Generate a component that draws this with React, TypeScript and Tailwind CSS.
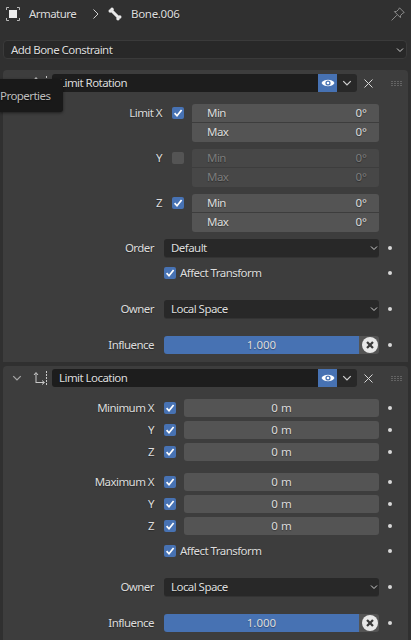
import type { ReactNode } from "react";

const Check = () => (
  <svg viewBox="0 0 12 12" className="w-3 h-3">
    <path d="M2.6 6.2 L5 8.8 L9.6 3" fill="none" stroke="#fff" strokeWidth="1.7" />
  </svg>
);

const Checkbox = ({ on = true }: { on?: boolean }) => (
  <div className={on ? "w-3 h-3 shrink-0 rounded-[2px] bg-[#4772b3]" : "w-3 h-3 shrink-0 rounded-[2px] bg-[#545454]"}>
    {on && <Check />}
  </div>
);

const Chevron = ({ className = "w-2 h-2", stroke = "#d0d0d0" }: { className?: string; stroke?: string }) => (
  <svg viewBox="0 0 8 8" className={className}>
    <path d="M1 2.5 L4 5.5 L7 2.5" fill="none" stroke={stroke} strokeWidth="1" />
  </svg>
);

const Dot = () => <div className="w-[4px] h-[4px] rounded-full bg-[#d8d8d8]" />;

const Select = ({ text }: { text: string }) => (
  <div className="flex items-center justify-between h-[18px] w-full pl-[7px] pr-[1px] rounded-[3px] bg-[#282828] shadow-[0_1px_0_#333333]">
    <span>{text}</span>
    <Chevron />
  </div>
);

// label + control + decorator dot, the usual blender property row
const Row = ({ label, children, dot = true }: { label?: string; children: ReactNode; dot?: boolean }) => (
  <div className="flex items-center h-[18px]">
    <div className="w-[151px] text-right shrink-0">{label}</div>
    <div className="ml-[10px] w-[215px] shrink-0">{children}</div>
    <div className="ml-[9px] w-[4px]">{dot && <Dot />}</div>
  </div>
);

const AngleRow = ({ label, on = true }: { label: string; on?: boolean }) => {
  const fieldText = on ? "text-[#dcdcdc]" : "text-[#7c7c7c]";
  const fieldBg = on ? "bg-[#545454]" : "bg-[#474747]";
  return (
    <div className="flex items-start">
      <div className="w-[159px] h-[18px] flex items-center justify-end shrink-0">{label}</div>
      <div className="ml-[10px] mt-[3px]">
        <Checkbox on={on} />
      </div>
      <div className={`ml-[8px] w-[187px] flex flex-col gap-[1px] ${fieldText}`}>
        <div className={`flex justify-between items-center h-[18px] pl-[15px] pr-[12px] rounded-t-[3px] ${fieldBg}`}>
          <span>Min</span>
          <span className="tracking-normal">0°</span>
        </div>
        <div className={`flex justify-between items-center h-[19px] pb-[1px] pl-[15px] pr-[12px] rounded-b-[3px] ${fieldBg}`}>
          <span>Max</span>
          <span className="tracking-normal">0°</span>
        </div>
      </div>
    </div>
  );
};

const MeterRow = ({ label }: { label: string }) => (
  <div className="flex items-center h-[18px]">
    <div className="w-[151px] text-right shrink-0">{label}</div>
    <div className="ml-[10px]">
      <Checkbox />
    </div>
    <div className="ml-[8px] w-[195px] h-[18px] flex items-center justify-center rounded-[3px] bg-[#545454] tracking-normal">0 m</div>
    <div className="ml-[9px]">
      <Dot />
    </div>
  </div>
);

const AffectTransform = () => (
  <Row>
    <div className="flex items-center gap-[4px]">
      <Checkbox />
      <span>Affect Transform</span>
    </div>
  </Row>
);

const Influence = () => (
  <Row label="Influence">
    <div className="flex h-[18px]">
      <div className="w-[195px] flex items-center justify-center rounded-l-[3px] bg-[#4772b3] tracking-normal">1.000</div>
      <div className="w-[20px] flex items-center justify-center pl-[2px] rounded-r-[3px] bg-[#545454]">
        <svg viewBox="0 0 14 14" className="w-[16px] h-[16px]">
          <circle cx="7" cy="7" r="7" fill="#e8e8e8" />
          <path d="M4.4 4.4 L9.6 9.6 M9.6 4.4 L4.4 9.6" stroke="#3a3a3a" strokeWidth="2" />
        </svg>
      </div>
    </div>
  </Row>
);

const Grip = () => (
  <svg viewBox="0 0 11 5" className="w-[11px] h-[5px]">
    {[0.5, 3.5, 6.5, 9.5].map((x) =>
      [0, 2, 4].map((y) => <rect key={`${x}-${y}`} x={x} y={y} width="1" height="1" fill="#8a8a8a" />)
    )}
  </svg>
);

const Eye = () => (
  <svg viewBox="0 0 14 10" className="w-[14px] h-[10px]">
    <path d="M0.5 5 C3 0.6 11 0.6 13.5 5 C11 9.4 3 9.4 0.5 5 Z" fill="#fff" />
    <circle cx="7" cy="5" r="2.6" fill="#4772b3" />
    <circle cx="7" cy="5" r="1.3" fill="#fff" />
  </svg>
);

const PanelHeader = ({ name, icon }: { name: string; icon: ReactNode }) => (
  <div className="flex items-center h-[18px]">
    <div className="w-[24px] flex justify-center pl-[3px] shrink-0">
      <Chevron className="w-[10px] h-[10px]" stroke="#a8a8a8" />
    </div>
    <div className="w-[25px] flex justify-center shrink-0">{icon}</div>
    <div className="flex-1 max-w-[266px] h-[18px] flex items-center pl-[7px] rounded-l-[3px] bg-[#1d1d1d]">{name}</div>
    <div className="w-[19px] h-[18px] flex items-center justify-center bg-[#4772b3]">
      <Eye />
    </div>
    <div className="w-[20px] h-[18px] flex items-center justify-center rounded-r-[3px] bg-[#282828]">
      <Chevron className="w-[10px] h-[10px]" />
    </div>
    <svg viewBox="0 0 9 9" className="w-[9px] h-[9px] ml-[7px]">
      <path d="M0.5 0.5 L8.5 8.5 M8.5 0.5 L0.5 8.5" stroke="#d8d8d8" strokeWidth="1" />
    </svg>
    <div className="ml-[18px]">
      <Grip />
    </div>
  </div>
);

const LocationIcon = () => (
  <svg viewBox="0 0 14 14" className="w-[14px] h-[14px]" fill="none" stroke="#c8c8c8" strokeWidth="1">
    <path d="M3 12 V2 M1 4 L3 1.5 L5 4 M3 11.5 H11 M9 9.5 L11.5 11.5 L9 13.5" />
    <path d="M13.5 0 V14" strokeDasharray="2 1" />
  </svg>
);

const App = () => (
  <div
    className="relative w-[411px] h-[640px] overflow-hidden bg-[#303030] text-[11.5px] tracking-[-0.55px] leading-none text-[#dcdcdc] [text-shadow:0_1px_1px_rgba(0,0,0,0.35)]"
    style={{ fontFamily: '"Noto Sans", sans-serif' }}
  >
    {/* breadcrumbs */}
    <div className="flex items-center h-[28px] pl-[6px] pr-[6px]">
      <svg viewBox="0 0 14 14" className="w-[14px] h-[14px]">
        <rect x="3" y="3" width="8" height="8" fill="#ececec" />
        <path d="M0.5 3 V0.5 H3 M11 0.5 H13.5 V3 M13.5 11 V13.5 H11 M3 13.5 H0.5 V11" fill="none" stroke="#b8b8b8" />
      </svg>
      <span className="ml-[9px] w-[64px]">Armature</span>
      <svg viewBox="0 0 6 10" className="w-[6px] h-[10px]">
        <path d="M0.5 0.5 L5 5 L0.5 9.5" fill="none" stroke="#d0d0d0" />
      </svg>
      <svg viewBox="0 0 14 14" className="ml-[9px] w-[14px] h-[14px]">
        <path d="M3.5 3.5 L10.5 10.5" stroke="#e8e8e8" strokeWidth="3" />
        <circle cx="2.2" cy="4" r="1.7" fill="#e8e8e8" />
        <circle cx="4" cy="2.2" r="1.7" fill="#e8e8e8" />
        <circle cx="10" cy="11.8" r="1.7" fill="#e8e8e8" />
        <circle cx="11.8" cy="10" r="1.7" fill="#e8e8e8" />
      </svg>
      <span className="ml-[9px] tracking-[-0.3px]">Bone.006</span>
      <svg viewBox="0 0 14 14" className="ml-auto w-[14px] h-[14px]" fill="none" stroke="#8c8c8c">
        <path d="M8.5 0.8 L13.2 5.5 L11.8 6.2 L9.6 8.4 L9.4 10.6 L3.4 4.6 L5.6 4.4 L7.8 2.2 Z M5.8 8.2 L0.6 13.4" />
      </svg>
    </div>

    <div className="mt-[12px] mx-[3px] w-[404px] h-[19px] flex items-center justify-between pl-[7px] pr-[2px] rounded-[4px] bg-[#282828] border border-[#3a3a3a]">
      <span>Add Bone Constraint</span>
      <Chevron />
    </div>

    {/* Limit Rotation */}
    <div className="mt-[11px] ml-[3px] w-[405px] h-[292px] pt-[4px] rounded-t-[4px] bg-[#3d3d3d]">
      <PanelHeader name="Limit Rotation" icon={<LocationIcon />} />
      <div className="mt-[12px] flex flex-col gap-[7px]">
        <AngleRow label="Limit X" />
        <AngleRow label="Y" on={false} />
        <AngleRow label="Z" />
      </div>
      <div className="mt-[7px]">
        <Row label="Order">
          <Select text="Default" />
        </Row>
      </div>
      <div className="mt-[7px]">
        <AffectTransform />
      </div>
      <div className="mt-[18px]">
        <Row label="Owner">
          <Select text="Local Space" />
        </Row>
      </div>
      <div className="mt-[18px]">
        <Influence />
      </div>
    </div>

    {/* Limit Location */}
    <div className="mt-[4px] ml-[3px] w-[405px] h-[280px] pt-[3px] rounded-t-[4px] bg-[#3d3d3d]">
      <PanelHeader name="Limit Location" icon={<LocationIcon />} />
      <div className="mt-[12px] flex flex-col gap-[4px]">
        <MeterRow label="Minimum X" />
        <MeterRow label="Y" />
        <MeterRow label="Z" />
      </div>
      <div className="mt-[12px] flex flex-col gap-[4px]">
        <MeterRow label="Maximum X" />
        <MeterRow label="Y" />
        <MeterRow label="Z" />
      </div>
      <div className="mt-[7px]">
        <AffectTransform />
      </div>
      <div className="mt-[18px]">
        <Row label="Owner">
          <Select text="Local Space" />
        </Row>
      </div>
      <div className="mt-[18px]">
        <Influence />
      </div>
    </div>

    {/* tooltip over the panel header */}
    <div className="absolute left-0 top-[79px] w-[63px] h-[33px] flex items-center pr-[14px] rounded-r-[3px] bg-[#191919] text-[#bdbdbd] shadow-[0_1px_3px_rgba(0,0,0,0.5)] overflow-hidden whitespace-nowrap">
      Properties
    </div>
  </div>
);

export default App;
